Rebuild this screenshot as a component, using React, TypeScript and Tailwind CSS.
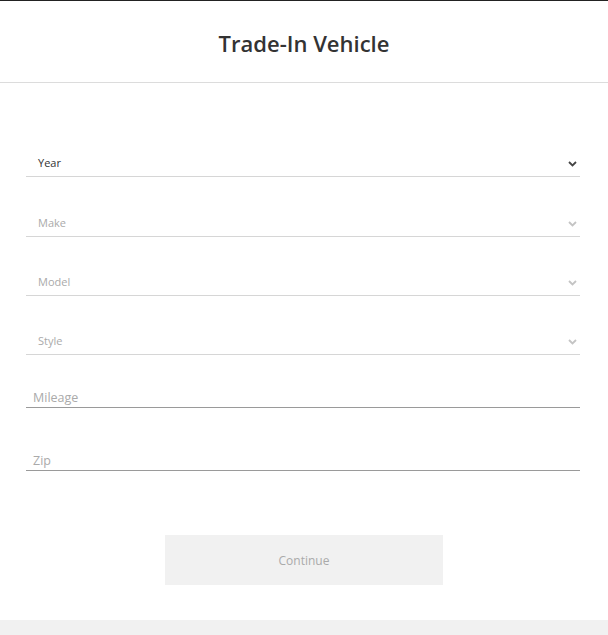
import React from "react";

const font = { fontFamily: '"Open Sans", "Noto Sans", Arial, sans-serif' };

function Chevron({ dark }: { dark?: boolean }) {
  return (
    <svg width="9" height="6" viewBox="0 0 9 6" className="shrink-0">
      <path
        d="M1 1 L4.5 4.5 L8 1"
        fill="none"
        stroke={dark ? "#444" : "#c4c4c4"}
        strokeWidth="1.8"
      />
    </svg>
  );
}

function SelectField({ label, active, mt }: { label: string; active?: boolean; mt: string }) {
  return (
    <div
      className={`flex h-[29px] items-center justify-between border-b border-[#d6d6d6] pl-[12px] pr-[3px] pt-[3px] ${mt}`}
    >
      <span className={`text-[11px] ${active ? "text-[#333]" : "text-[#aaa]"}`}>{label}</span>
      <Chevron dark={active} />
    </div>
  );
}

function InputField({ label, mt }: { label: string; mt: string }) {
  return (
    <div className={`flex h-[20px] items-center border-b border-[#9a9a9a] pl-[7px] pt-[2px] ${mt}`}>
      <span className="text-[12.5px] text-[#aaa]">{label}</span>
    </div>
  );
}

export default function App() {
  return (
    <div className="flex h-[635px] w-[608px] flex-col bg-white" style={font}>
      <div className="flex h-[83px] items-center justify-center border-t border-b border-t-[#222] border-b-[#dcdcdc] pt-[4px]">
        <h1 className="text-[22px] font-semibold text-[#333]">Trade-In Vehicle</h1>
      </div>
      <div className="flex flex-col pl-[26px] pr-[28px] pt-[65px]">
        <SelectField label="Year" active mt="mt-0" />
        <SelectField label="Make" mt="mt-[31px]" />
        <SelectField label="Model" mt="mt-[30px]" />
        <SelectField label="Style" mt="mt-[30px]" />
        <InputField label="Mileage" mt="mt-[33px]" />
        <InputField label="Zip" mt="mt-[43px]" />
      </div>
      <div className="flex justify-center pt-[64px]">
        <button className="flex h-[50px] w-[278px] items-center justify-center bg-[#f1f1f1] pt-[2px] text-[12px] text-[#aaa]">
          Continue
        </button>
      </div>
      <div className="flex-1" />
      <div className="h-[15px] bg-[#f1f1f1]" />
    </div>
  );
}
